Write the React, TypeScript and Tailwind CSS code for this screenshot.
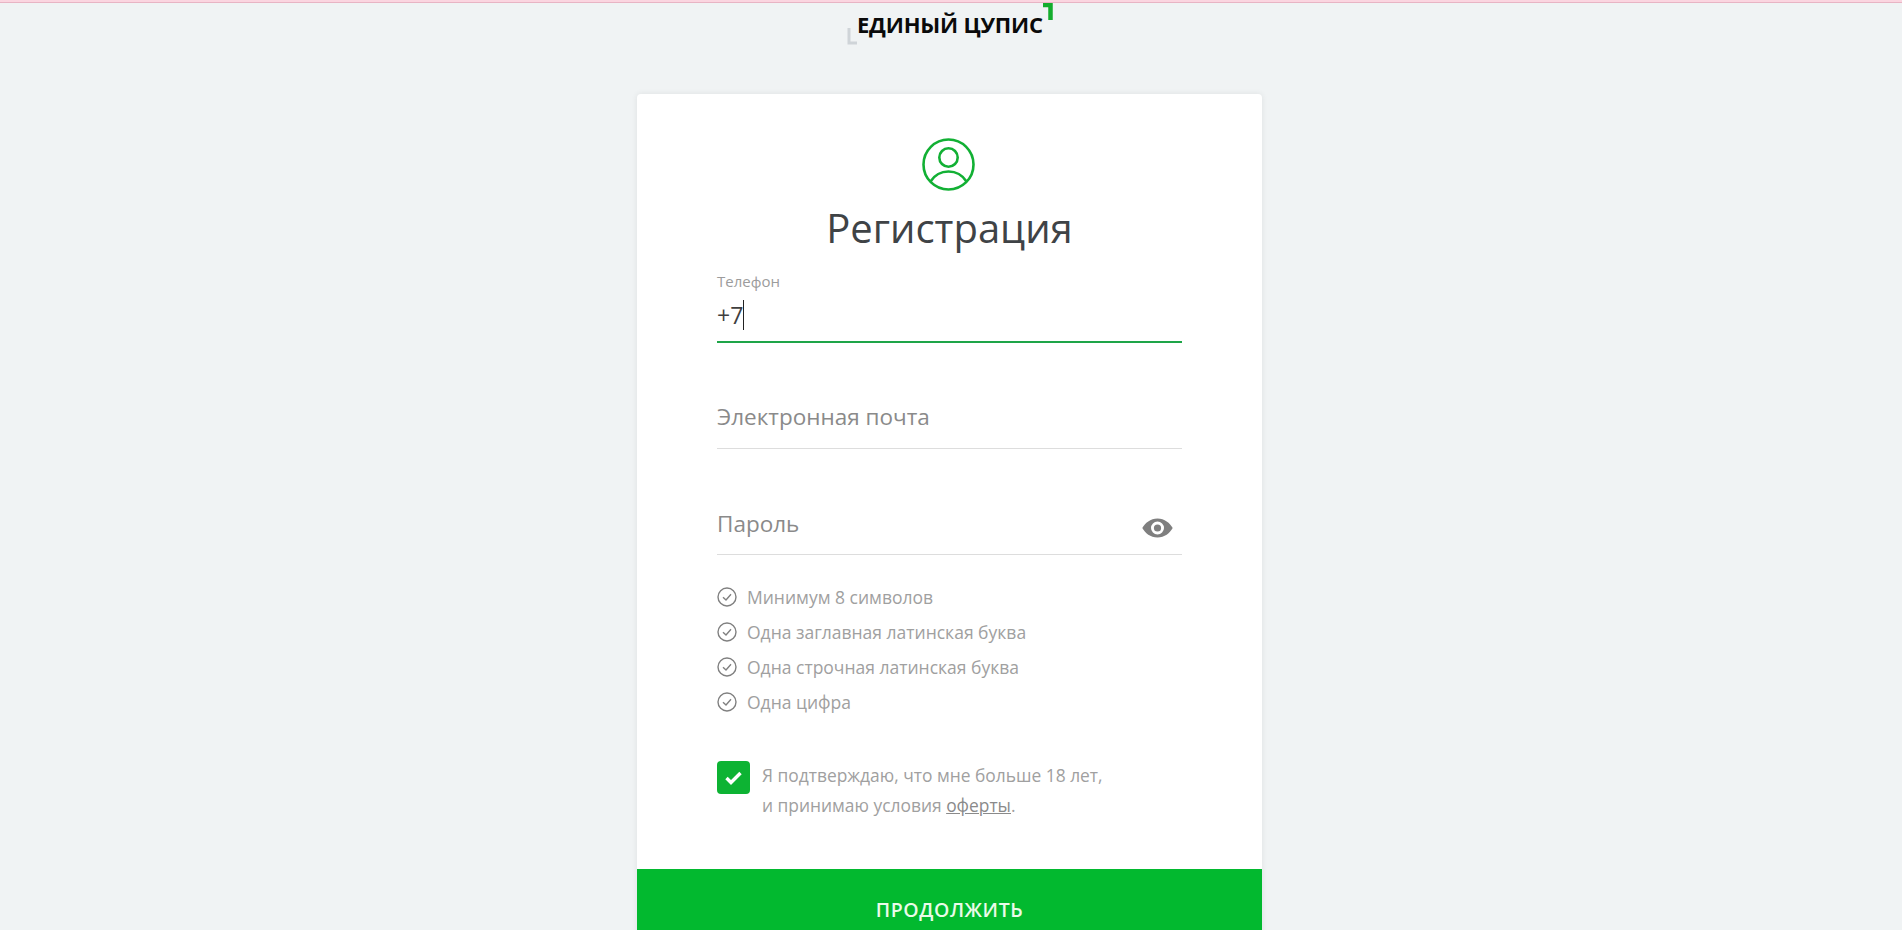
export default function App() {
  const rules = ["Минимум 8 символов", "Одна заглавная латинская буква", "Одна строчная латинская буква", "Одна цифра"];
  return (
    <div className="h-[930px] overflow-hidden bg-[#f0f3f4] font-['Open_Sans',sans-serif]">
      <div className="h-[3px] border-b border-[#e8b4c4] bg-[#fbd5e0]" />
      <div className="flex h-[91px] justify-center">
        <div className="relative ml-[-2px] h-[40px] w-[186px]">
          <div className="pt-[6px] text-[22px] leading-[30px] font-bold tracking-[-0.2px] whitespace-nowrap text-[#0a0a0a]">ЕДИНЫЙ ЦУПИС</div>
          <svg className="absolute top-0 left-[185px]" width="12" height="18" viewBox="0 0 12 18">
            <path d="M1 2H8.5V17" fill="none" stroke="#14ad2d" strokeWidth="4.5" />
          </svg>
          <svg className="absolute top-[25px] left-[-11px]" width="12" height="18" viewBox="0 0 12 18">
            <path d="M3 0V15H11" fill="none" stroke="#cfd4d8" strokeWidth="3" />
          </svg>
        </div>
      </div>
      <div className="mx-auto ml-[637px] w-[625px] rounded-t-[4px] bg-white shadow-[0_0_6px_rgba(0,0,0,0.08)]">
        <div className="flex h-[775px] flex-col px-[80px]">
          <div className="flex justify-center pt-[44px]">
            <svg className="ml-[-2px]" width="53" height="53" viewBox="0 0 53 53" fill="none" stroke="#12b034" strokeWidth="2.6">
              <circle cx="26.5" cy="26.5" r="25" />
              <circle cx="26.5" cy="19.5" r="9.2" />
              <path d="M8.5 43.5C13 36.5 19 33.5 26.5 33.5C34 33.5 40 36.5 44.5 43.5" />
            </svg>
          </div>
          <h1 className="mt-[10px] text-center text-[40px] leading-[54px] font-normal text-[#3f4346]">Регистрация</h1>

          <div className="mt-[16px] h-[72px] border-b-2 border-[#1ea548]">
            <div className="h-[20px] text-[15px] leading-[20px] font-normal text-[#9c9c9c]">Телефон</div>
            <div className="mt-[6px] flex h-[36px] items-center text-[23px] leading-[36px] font-normal text-[#3f3f3f]">
              +7<span className="h-[30px] w-px bg-[#222]" />
            </div>
          </div>

          <div className="mt-[45px] flex h-[61px] items-center border-b border-[#dddddd] text-[22.5px] text-[#8a8a8a]">
            <span className="mb-[2px]">Электронная почта</span>
          </div>

          <div className="mt-[45px] flex h-[61px] items-center justify-between border-b border-[#dddddd] text-[22.5px] text-[#8a8a8a]">
            <span>Пароль</span>
            <svg className="mt-[8px] mr-[9px]" width="31" height="20" viewBox="0 0 31 20">
              <path fill="#7f7f7f" fillRule="evenodd" d="M15.5 0.5C22.5 0.5 28 5 30.7 10C28 15 22.5 19.5 15.5 19.5C8.5 19.5 3 15 0.3 10C3 5 8.5 0.5 15.5 0.5ZM15.5 3.5A6.5 6.5 0 1 0 15.5 16.5A6.5 6.5 0 1 0 15.5 3.5Z" />
              <circle cx="15.5" cy="10" r="3.6" fill="#7f7f7f" />
            </svg>
          </div>

          <ul className="mt-[27px] flex flex-col gap-[5px]">
            {rules.map((rule) => (
              <li key={rule} className="flex h-[30px] items-center gap-[10px] text-[17.5px] font-normal text-[#a0a0a0]">
                <svg width="20" height="20" viewBox="0 0 20 20" fill="none" stroke="#808080" strokeWidth="1.4">
                  <circle cx="10" cy="10" r="9" />
                  <path d="M6 10.2L9 13L14 7.2" />
                </svg>
                {rule}
              </li>
            ))}
          </ul>

          <div className="mt-[43px] flex gap-[12px]">
            <div className="mt-[1px] flex h-[33px] w-[33px] items-center justify-center rounded-[4px] bg-[#0db333]">
              <svg width="17" height="14" viewBox="0 0 17 14" fill="none" stroke="#ffffff" strokeWidth="3.4">
                <path d="M1.5 7L6 11.5L15.5 2" />
              </svg>
            </div>
            <p className="text-[17.4px] leading-[30px] font-normal text-[#a0a0a0]">
              Я подтверждаю, что мне больше 18 лет,
              <br />и принимаю условия <span className="text-[#8a8a8a] underline">оферты</span>.
            </p>
          </div>
        </div>
        <button className="flex h-[100px] w-full justify-center bg-[#02b92f] pt-[28px] text-[19.5px] leading-[26px] font-semibold tracking-[0.6px] text-[#eafbe9]">ПРОДОЛЖИТЬ</button>
      </div>
    </div>
  );
}
